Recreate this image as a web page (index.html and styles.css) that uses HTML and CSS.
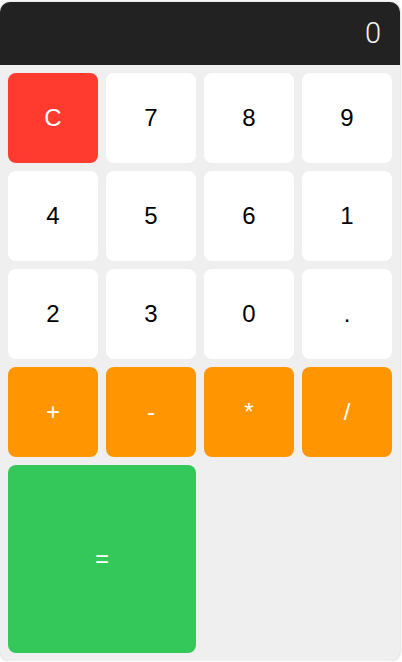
FILE: index.html
```html
<!DOCTYPE html>
<html>
<head>
<meta charset="utf-8">
<link rel="stylesheet" href="styles.css">
</head>
<body>
<div class="calc">
  <div class="display">0</div>
  <div class="keys">
    <button class="key clear">C</button>
    <button class="key">7</button>
    <button class="key">8</button>
    <button class="key">9</button>
    <button class="key">4</button>
    <button class="key">5</button>
    <button class="key">6</button>
    <button class="key">1</button>
    <button class="key">2</button>
    <button class="key">3</button>
    <button class="key">0</button>
    <button class="key">.</button>
    <button class="key op">+</button>
    <button class="key op">-</button>
    <button class="key op">*</button>
    <button class="key op">/</button>
    <button class="key equals">=</button>
  </div>
</div>
</body>
</html>
```
FILE: styles.css
```css
html, body {
  margin: 0;
  padding: 0;
  background: #ffffff;
  font-family: "Liberation Sans", Arial, sans-serif;
}
.calc {
  width: 400px;
  margin-top: 2px;
  background: #efefef;
  border-radius: 10px;
  overflow: hidden;
  box-shadow: 0 0 3px rgba(0, 0, 0, 0.25);
}
.display {
  height: 63px;
  box-sizing: border-box;
  background: #222222;
  color: #f4f4f4;
  font-family: Roboto, "Liberation Sans", sans-serif;
  font-weight: 300;
  font-size: 29px;
  display: flex;
  align-items: center;
  justify-content: flex-end;
  padding: 0 19px 2px 0;
}
.keys {
  display: grid;
  grid-template-columns: repeat(4, 90px);
  grid-auto-rows: 90px;
  gap: 8px;
  padding: 8px;
}
.key {
  border: none;
  border-radius: 8px;
  background: #ffffff;
  color: #000000;
  font-family: "Liberation Sans", Arial, sans-serif;
  font-size: 24px;
  padding: 0;
  margin: 0;
}
.clear {
  background: #ff3b30;
  color: #ffffff;
}
.op {
  background: #ff9500;
  color: #ffffff;
}
.equals {
  background: #34c759;
  color: #ffffff;
  grid-column: span 2;
  grid-row: span 2;
}
```
